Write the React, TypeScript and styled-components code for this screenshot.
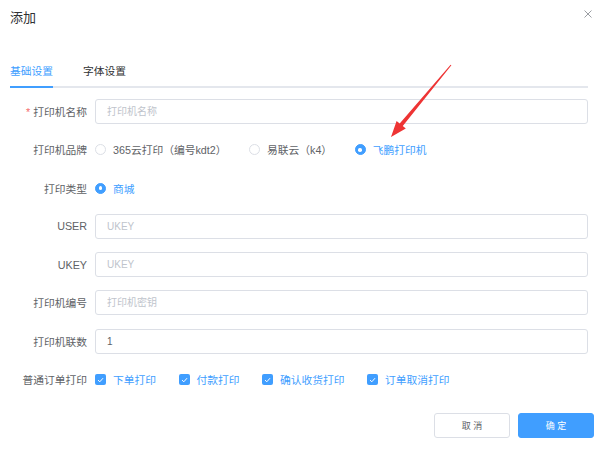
import React from 'react'
import styled, { createGlobalStyle } from 'styled-components'

const GlobalStyle = createGlobalStyle`
  html, body {
    margin: 0;
    padding: 0;
    background: #ffffff;
  }
  body {
    font-family: "Liberation Sans", "Noto Sans CJK SC", sans-serif;
    -webkit-font-smoothing: antialiased;
  }
`

const Dialog = styled.div`
  position: relative;
  width: 600px;
  height: 451px;
  background: #ffffff;
  box-sizing: border-box;
`

const Header = styled.div`
  display: flex;
  justify-content: space-between;
  align-items: flex-start;
  height: 35px;
  padding: 0 8px 0 10px;
`

const Title = styled.div`
  font-size: 13px;
  line-height: 35px;
  color: #303133;
`

const CloseButton = styled.button`
  margin-top: 10px;
  width: 8px;
  height: 8px;
  padding: 0;
  border: none;
  background: transparent;
  display: flex;
  cursor: pointer;
`

const TabNav = styled.div`
  display: flex;
  gap: 30px;
  margin: 22px 12px 0 10px;
  height: 29px;
  border-bottom: 2px solid #e4e7ed;
`

const Tab = styled.div<{ active?: boolean }>`
  font-size: 10.75px;
  line-height: 29px;
  color: ${({ active }) => (active ? '#409eff' : '#303133')};
  border-bottom: 2px solid ${({ active }) => (active ? '#409eff' : 'transparent')};
  margin-bottom: -2px;
  cursor: pointer;
`

const Form = styled.div`
  display: flex;
  flex-direction: column;
  gap: 13.3px;
  margin-top: 11px;
  padding-right: 12px;
`

const Row = styled.div`
  display: flex;
  align-items: center;
  height: 25px;
`

const Label = styled.label`
  width: 95px;
  padding-right: 8px;
  box-sizing: border-box;
  text-align: right;
  font-size: 10.75px;
  color: #606266;
  white-space: nowrap;
`

const Required = styled.span`
  color: #f56c6c;
  margin-right: 3px;
`

const Input = styled.input`
  flex: 1;
  height: 25px;
  box-sizing: border-box;
  border: 1px solid #dcdfe6;
  border-radius: 3px;
  padding: 0 11px;
  font-family: inherit;
  font-size: 10px;
  color: #606266;
  outline: none;
  &::placeholder {
    color: #c0c4cc;
  }
`

const OptionGroup = styled.div`
  display: flex;
  align-items: center;
`

const Option = styled.span<{ checked?: boolean }>`
  display: inline-flex;
  align-items: center;
  margin-right: 22.5px;
  font-size: 10.75px;
  color: ${({ checked }) => (checked ? '#409eff' : '#606266')};
  white-space: nowrap;
  cursor: pointer;
`

const RadioDot = styled.span<{ checked?: boolean }>`
  width: 11px;
  height: 11px;
  box-sizing: border-box;
  border-radius: 50%;
  border: 1px solid ${({ checked }) => (checked ? '#409eff' : '#dcdfe6')};
  background: ${({ checked }) => (checked ? '#409eff' : '#ffffff')};
  margin-right: 7px;
  display: flex;
  align-items: center;
  justify-content: center;
  &::after {
    content: '';
    width: 3.5px;
    height: 3.5px;
    border-radius: 50%;
    background: #ffffff;
    display: ${({ checked }) => (checked ? 'block' : 'none')};
  }
`

const CheckBox = styled.span`
  width: 11px;
  height: 11px;
  border-radius: 2px;
  background: #409eff;
  margin-right: 7px;
  display: flex;
  align-items: center;
  justify-content: center;
`

const Footer = styled.div`
  display: flex;
  justify-content: flex-end;
  gap: 8px;
  margin-top: 21px;
  padding-right: 6px;
`

const Button = styled.button<{ primary?: boolean }>`
  width: 76px;
  height: 24.5px;
  box-sizing: border-box;
  border-radius: 3px;
  border: 1px solid ${({ primary }) => (primary ? '#409eff' : '#dcdfe6')};
  background: ${({ primary }) => (primary ? '#409eff' : '#ffffff')};
  color: ${({ primary }) => (primary ? '#ffffff' : '#606266')};
  font-family: inherit;
  font-size: 9px;
  padding: 0;
  cursor: pointer;
`

const ArrowLayer = styled.svg`
  position: absolute;
  left: 0;
  top: 0;
  pointer-events: none;
`

const Radio: React.FC<{ checked?: boolean; text: string }> = ({ checked, text }) => (
  <Option checked={checked}>
    <RadioDot checked={checked} />
    {text}
  </Option>
)

const Check: React.FC<{ text: string }> = ({ text }) => (
  <Option checked>
    <CheckBox>
      <svg width="7" height="6" viewBox="0 0 7 6">
        <path d="M1 3.1 L2.8 4.8 L6 1.2" fill="none" stroke="#fff" strokeWidth="1" />
      </svg>
    </CheckBox>
    {text}
  </Option>
)

const fields = [
  { label: 'USER', placeholder: 'UKEY' },
  { label: 'UKEY', placeholder: 'UKEY' },
  { label: '打印机编号', placeholder: '打印机密钥' },
]

const App: React.FC = () => {
  return (
    <>
      <GlobalStyle />
      <Dialog>
        <Header>
          <Title>添加</Title>
          <CloseButton aria-label="close">
            <svg width="8" height="8" viewBox="0 0 8 8">
              <path d="M0.5 0.5 L7.5 7.5 M7.5 0.5 L0.5 7.5" stroke="#909399" strokeWidth="0.9" />
            </svg>
          </CloseButton>
        </Header>

        <TabNav>
          <Tab active>基础设置</Tab>
          <Tab>字体设置</Tab>
        </TabNav>

        <Form>
          <Row>
            <Label>
              <Required>*</Required>打印机名称
            </Label>
            <Input placeholder="打印机名称" />
          </Row>
          <Row>
            <Label>打印机品牌</Label>
            <OptionGroup>
              <Radio text="365云打印（编号kdt2）" />
              <Radio text="易联云（k4）" />
              <Radio checked text="飞鹏打印机" />
            </OptionGroup>
          </Row>
          <Row>
            <Label>打印类型</Label>
            <OptionGroup>
              <Radio checked text="商城" />
            </OptionGroup>
          </Row>
          {fields.map((f) => (
            <Row key={f.label}>
              <Label>{f.label}</Label>
              <Input placeholder={f.placeholder} />
            </Row>
          ))}
          <Row>
            <Label>打印机联数</Label>
            <Input defaultValue="1" />
          </Row>
          <Row>
            <Label>普通订单打印</Label>
            <OptionGroup>
              <Check text="下单打印" />
              <Check text="付款打印" />
              <Check text="确认收货打印" />
              <Check text="订单取消打印" />
            </OptionGroup>
          </Row>
        </Form>

        <Footer>
          <Button>取 消</Button>
          <Button primary>确 定</Button>
        </Footer>

        <ArrowLayer width="600" height="451" viewBox="0 0 600 451">
          <polygon
            points="451.4,65.3 402.8,126 405.8,128.5 391,137 396.6,120.9 399.7,123.4 450.6,64.7"
            fill="#ee3434"
          />
        </ArrowLayer>
      </Dialog>
    </>
  )
}

export default App
